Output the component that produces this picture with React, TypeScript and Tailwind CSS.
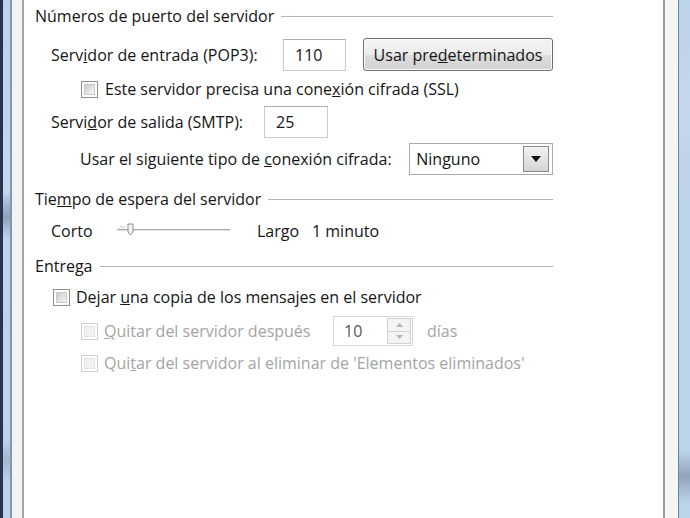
import { ReactNode } from "react";

const font = { fontFamily: '"Open Sans", "Noto Sans", sans-serif' };

function Heading({ children, className = "" }: { children: ReactNode; className?: string }) {
  return (
    <div className={"flex items-center gap-[7px] " + className}>
      <span className="whitespace-nowrap">{children}</span>
      <div className="h-px flex-1 bg-[#b4b4b4]" />
    </div>
  );
}

function Check({ disabled = false }: { disabled?: boolean }) {
  return (
    <div
      className={
        "flex h-[17px] w-[17px] shrink-0 items-center justify-center border bg-white " +
        (disabled ? "border-[#cfcfcf]" : "border-[#8e8f8f]")
      }
    >
      <div
        className={
          "h-[11px] w-[11px] border " +
          (disabled
            ? "border-[#e2e2e2] bg-[#f1f1f1]"
            : "border-[#c9c9c9] bg-[linear-gradient(135deg,#cdcdcd,#f6f6f6)]")
        }
      />
    </div>
  );
}

function TextBox({ value, className }: { value: string; className: string }) {
  return (
    <div
      className={
        "flex h-[32px] items-center border border-[#c8cbd0] border-t-[#abadb3] bg-white pl-[11px] " +
        className
      }
    >
      {value}
    </div>
  );
}

export default function App() {
  return (
    <div className="flex h-[518px] w-[690px] overflow-hidden text-[16px] text-[#151515]" style={font}>
      <div className="w-[3px] bg-[#26344c]" />
      <div className="w-[7px] bg-[linear-gradient(#bcd3ec,#c4d8ee_37%,#9fb4cc_40%,#8fa2b8_42%,#c0d5ec_46%,#bcd3ec_85%,#a3b6cc_89%,#bcd3ec_93%)]" />
      <div className="w-[2px] bg-[#8397b0]" />
      <div className="w-[10px] bg-[#f3f3f3]" />
      <div className="w-[2px] bg-[#a5a5a5]" />

      <div className="w-[639px] bg-white pl-[11px]">
        <div className="flex w-[518px] flex-col">
          <Heading className="h-[32px]">Números de puerto del servidor</Heading>

          <div className="mt-[6px] flex h-[33px] items-center">
            <span className="ml-[16px] w-[232px]">
              Serv<u>i</u>dor de entrada (POP3):
            </span>
            <TextBox value="110" className="w-[63px]" />
            <button className="ml-[17px] h-[33px] w-[190px] rounded-[3px] border border-[#707070] bg-[linear-gradient(#f4f4f4_0%,#ececec_50%,#dedede_50%,#d2d2d2_100%)] shadow-[inset_0_0_0_1px_#fbfbfb]">
              Usar pre<u>d</u>eterminados
            </button>
          </div>

          <div className="mt-[9px] flex h-[18px] items-center">
            <div className="ml-[46px]">
              <Check />
            </div>
            <span className="ml-[7px]">
              Este servidor precisa una cone<u>x</u>ión cifrada (SSL)
            </span>
          </div>

          <div className="mt-[8px] flex h-[32px] items-center">
            <span className="ml-[16px] w-[213px]">
              Servi<u>d</u>or de salida (SMTP):
            </span>
            <TextBox value="25" className="w-[64px]" />
          </div>

          <div className="mt-[5px] flex h-[32px] items-center">
            <span className="ml-[45px] w-[330px]">
              Usar el siguiente tipo de <u>c</u>onexión cifrada:
            </span>
            <div className="flex h-[32px] w-[144px] items-center justify-between border border-[#a9abb0] bg-white pl-[6px] pr-[3px]">
              <span>Ninguno</span>
              <div className="flex h-[26px] w-[26px] items-center justify-center border border-[#8a8a8a] bg-[linear-gradient(#f2f2f2,#e4e4e4_50%,#d4d4d4)]">
                <svg width="10" height="6" viewBox="0 0 10 6">
                  <path d="M0 0 H10 L5 6 Z" fill="#111" />
                </svg>
              </div>
            </div>
          </div>

          <Heading className="mt-[14px] h-[20px]">
            Tie<u>m</u>po de espera del servidor
          </Heading>

          <div className="mt-[10px] flex h-[24px] items-center">
            <span className="ml-[16px] w-[65px]">Corto</span>
            <svg width="115" height="16" viewBox="0 0 115 16" className="mt-[-2px]">
              <rect x="1" y="7" width="113" height="1" fill="#a9a9a9" />
              <rect x="1" y="8" width="113" height="1" fill="#e4e4e4" />
              <path d="M3 6 L5 4 L7 6 L9 4" stroke="#c8c8c8" strokeWidth="1" fill="none" />
              <path d="M12 2 H17 V10 L14.5 13 L12 10 Z" fill="#f4f4f4" stroke="#8b8b8b" strokeWidth="1" />
            </svg>
            <span className="ml-[26px] w-[55px]">Largo</span>
            <span>1 minuto</span>
          </div>

          <Heading className="mt-[13px] h-[20px]">Entrega</Heading>

          <div className="mt-[11px] flex h-[20px] items-center">
            <div className="ml-[18px]">
              <Check />
            </div>
            <span className="ml-[6px]">
              Dejar <u>u</u>na copia de los mensajes en el servidor
            </span>
          </div>

          <div className="mt-[9px] flex h-[30px] items-center text-[#a4a4a4]">
            <div className="ml-[46px]">
              <Check disabled />
            </div>
            <span className="ml-[6px] w-[229px]">
              <u>Q</u>uitar del servidor después
            </span>
            <div className="flex h-[30px] w-[80px] items-center border border-[#d6d6d6] bg-white">
              <span className="ml-[10px] flex-1 text-[#5a5a5a]">10</span>
              <div className="mr-[1px] flex h-[26px] w-[24px] flex-col">
                <div className="flex flex-1 items-center justify-center border border-[#d2d2d2] bg-[#f4f4f4]">
                  <svg width="7" height="4" viewBox="0 0 7 4">
                    <path d="M0 4 L3.5 0 L7 4 Z" fill="#b5b5b5" />
                  </svg>
                </div>
                <div className="flex flex-1 items-center justify-center border border-t-0 border-[#d2d2d2] bg-[#f4f4f4]">
                  <svg width="7" height="4" viewBox="0 0 7 4">
                    <path d="M0 0 H7 L3.5 4 Z" fill="#b5b5b5" />
                  </svg>
                </div>
              </div>
            </div>
            <span className="ml-[14px]">días</span>
          </div>

          <div className="mt-[7px] flex h-[20px] items-center text-[#a4a4a4]">
            <div className="ml-[46px]">
              <Check disabled />
            </div>
            <span className="ml-[6px]">
              Qui<u>t</u>ar del servidor al eliminar de 'Elementos eliminados'
            </span>
          </div>
        </div>
      </div>

      <div className="w-[2px] bg-[#9b9b9b]" />
      <div className="w-[13px] bg-[#f5f5f5]" />
      <div className="w-[1px] bg-[#6f7f95]" />
      <div className="w-[11px] bg-[linear-gradient(#bcd3ec,#c3d6ec_20%,#bcd3ec_40%,#bcd3ec_87%,#8fa3bb_92%,#bcd3ec_97%)]" />
    </div>
  );
}
